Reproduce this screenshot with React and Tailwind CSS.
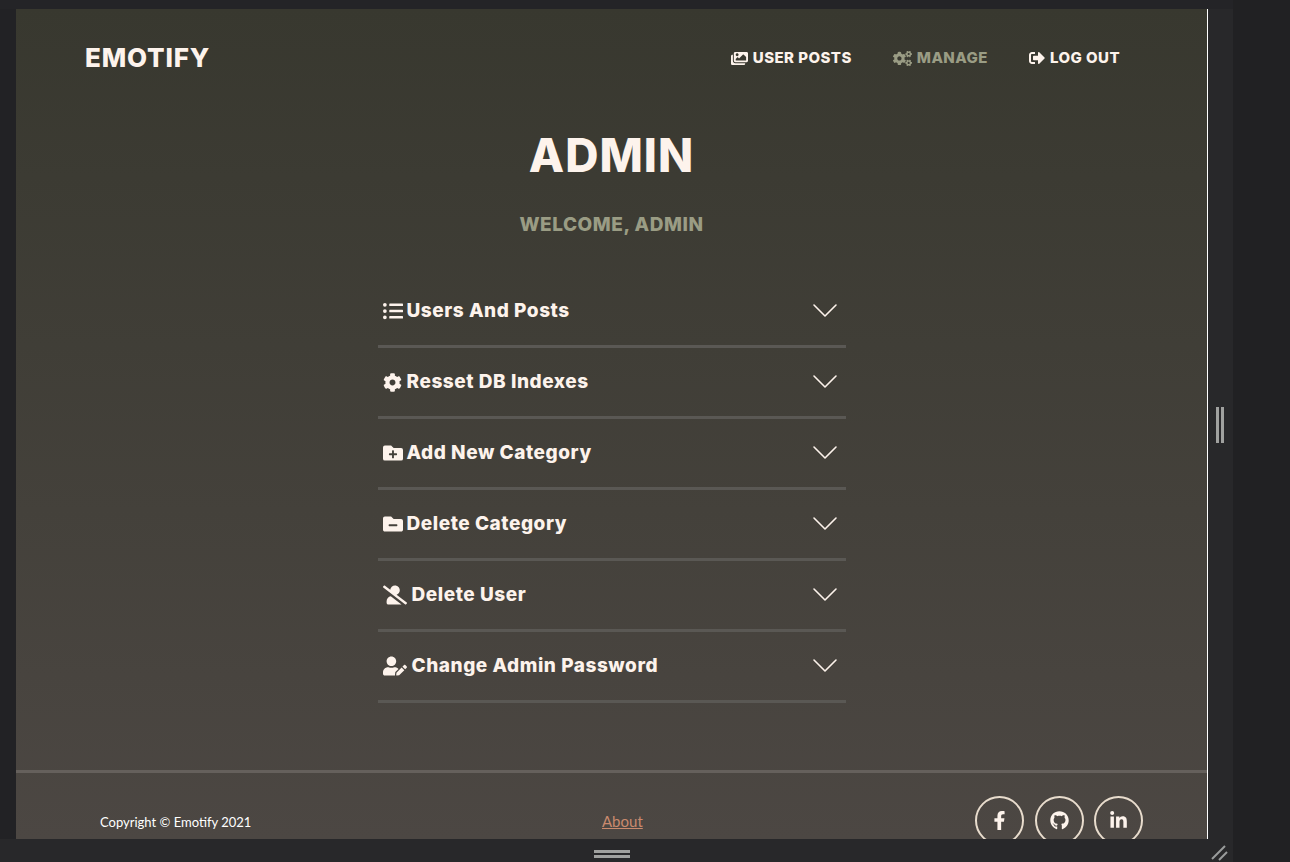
import { FaImages, FaCogs, FaSignOutAlt, FaListUl, FaCog, FaFolderPlus, FaFolderMinus, FaUserSlash, FaUserEdit, FaFacebookF, FaGithub, FaLinkedinIn } from 'react-icons/fa'

const rows = [
  { icon: FaListUl, label: 'Users And Posts', size: 'text-[20px]', gap: 'w-[24px]' },
  { icon: FaCog, label: 'Resset DB Indexes', size: 'text-[19px]', gap: 'w-[24px]' },
  { icon: FaFolderPlus, label: 'Add New Category', size: 'text-[20px]', gap: 'w-[24px]' },
  { icon: FaFolderMinus, label: 'Delete Category', size: 'text-[20px]', gap: 'w-[24px]' },
  { icon: FaUserSlash, label: 'Delete User', size: 'text-[24px]', gap: 'w-[29px]' },
  { icon: FaUserEdit, label: 'Change Admin Password', size: 'text-[24px]', gap: 'w-[29px]' },
]

const Chevron = () => (
  <svg width="26" height="16" viewBox="0 0 26 16" fill="none" stroke="#fdf3ec" strokeWidth="1.6" strokeLinecap="round" strokeLinejoin="round">
    <polyline points="2,2 13,13 24,2" />
  </svg>
)

const NavLink = ({ icon: Icon, label, active, size }) => (
  <a className={`flex items-center gap-[5px] text-[15px] font-extrabold tracking-[0.45px] ${active ? 'text-[#9a9c84]' : 'text-[#fdf3ec]'}`}>
    <Icon className={size} />
    {label}
  </a>
)

const Social = ({ icon: Icon }) => (
  <a className="flex h-[49px] w-[49px] items-center justify-center rounded-full border-2 border-[#e8dccd] text-[19px] text-[#fdf3ec]">
    <Icon />
  </a>
)

export default function App() {
  return (
    <div className="flex h-screen w-full flex-col overflow-hidden bg-[#212123] font-['Inter',sans-serif]">
      <div className="h-[9px] w-[1233px] shrink-0 bg-[#242427]" />
      <div className="flex h-[830px] shrink-0">
        <div className="w-[16px] shrink-0 bg-[#222225]" />
        <main className="flex h-[830px] w-[1192px] shrink-0 flex-col overflow-hidden border-r border-white bg-gradient-to-b from-[#38382f] to-[#4c4743]">
          <header className="flex h-[98px] shrink-0 items-center justify-between pl-[69px] pr-[87px]">
            <div className="text-[26px] font-extrabold leading-none tracking-[0.8px] text-[#fdf3ec]">EMOTIFY</div>
            <nav className="flex items-center gap-[41px]">
              <NavLink icon={FaImages} label="USER POSTS" size="text-[17px]" />
              <NavLink icon={FaCogs} label="MANAGE" size="text-[19px]" active />
              <NavLink icon={FaSignOutAlt} label="LOG OUT" size="text-[16px]" />
            </nav>
          </header>
          <h1 className="mt-[13px] text-center text-[46px] font-extrabold leading-[70px] tracking-[1px] text-[#fdf3ec]">ADMIN</h1>
          <h2 className="mt-[23px] text-center text-[19px] font-extrabold leading-[24px] tracking-[0.55px] text-[#9a9c84]">WELCOME, ADMIN</h2>
          <section className="mx-auto mt-[40px] w-[468px] shrink-0">
            {rows.map(({ icon: Icon, label, size, gap }) => (
              <div key={label} className="flex h-[71px] items-center justify-between border-b-[3px] border-[#5a5854] pl-[5px] pr-[8px]">
                <div className="flex items-center text-[19px] font-extrabold tracking-[0.55px] text-[#fdf3ec]">
                  <span className={`flex shrink-0 items-center ${gap}`}><Icon className={size} /></span>
                  {label}
                </div>
                <Chevron />
              </div>
            ))}
          </section>
          <footer className="mt-[67px] flex h-[94px] shrink-0 items-start border-t-[3px] border-[#65605c] pl-[84px] pr-[64px] pt-[23px]">
            <div className="mt-[17px] w-[502px] font-['Lato',sans-serif] text-[13px] leading-[18px] text-white">Copyright © Emotify 2021</div>
            <a className="mt-[15px] font-['Lato',sans-serif] text-[15px] leading-[20px] text-[#c98a6e] underline">About</a>
            <div className="ml-auto flex gap-[10.5px]">
              <Social icon={FaFacebookF} />
              <Social icon={FaGithub} />
              <Social icon={FaLinkedinIn} />
            </div>
          </footer>
        </main>
        <div className="flex w-[25px] shrink-0 items-center justify-center gap-[2px] bg-[#28282a] pr-[1px] pt-[2px]">
          <span className="h-[36px] w-[3px] bg-[#a0a19f]" />
          <span className="h-[36px] w-[3px] bg-[#a0a19f]" />
        </div>
      </div>
      <div className="flex h-[23px] w-[1233px] shrink-0 items-center bg-[#28282a]">
        <div className="ml-[594px] mt-[7px] flex w-[36px] flex-col gap-[2px]">
          <span className="h-[3px] bg-[#a0a19f]" />
          <span className="h-[3px] bg-[#a0a19f]" />
        </div>
        <svg className="ml-[580px] mt-[4px]" width="20" height="20" viewBox="0 0 20 20" stroke="#9a9c9c" strokeWidth="2">
          <line x1="2" y1="16" x2="15" y2="3" />
          <line x1="9" y1="17" x2="17" y2="9" />
        </svg>
      </div>
    </div>
  )
}
